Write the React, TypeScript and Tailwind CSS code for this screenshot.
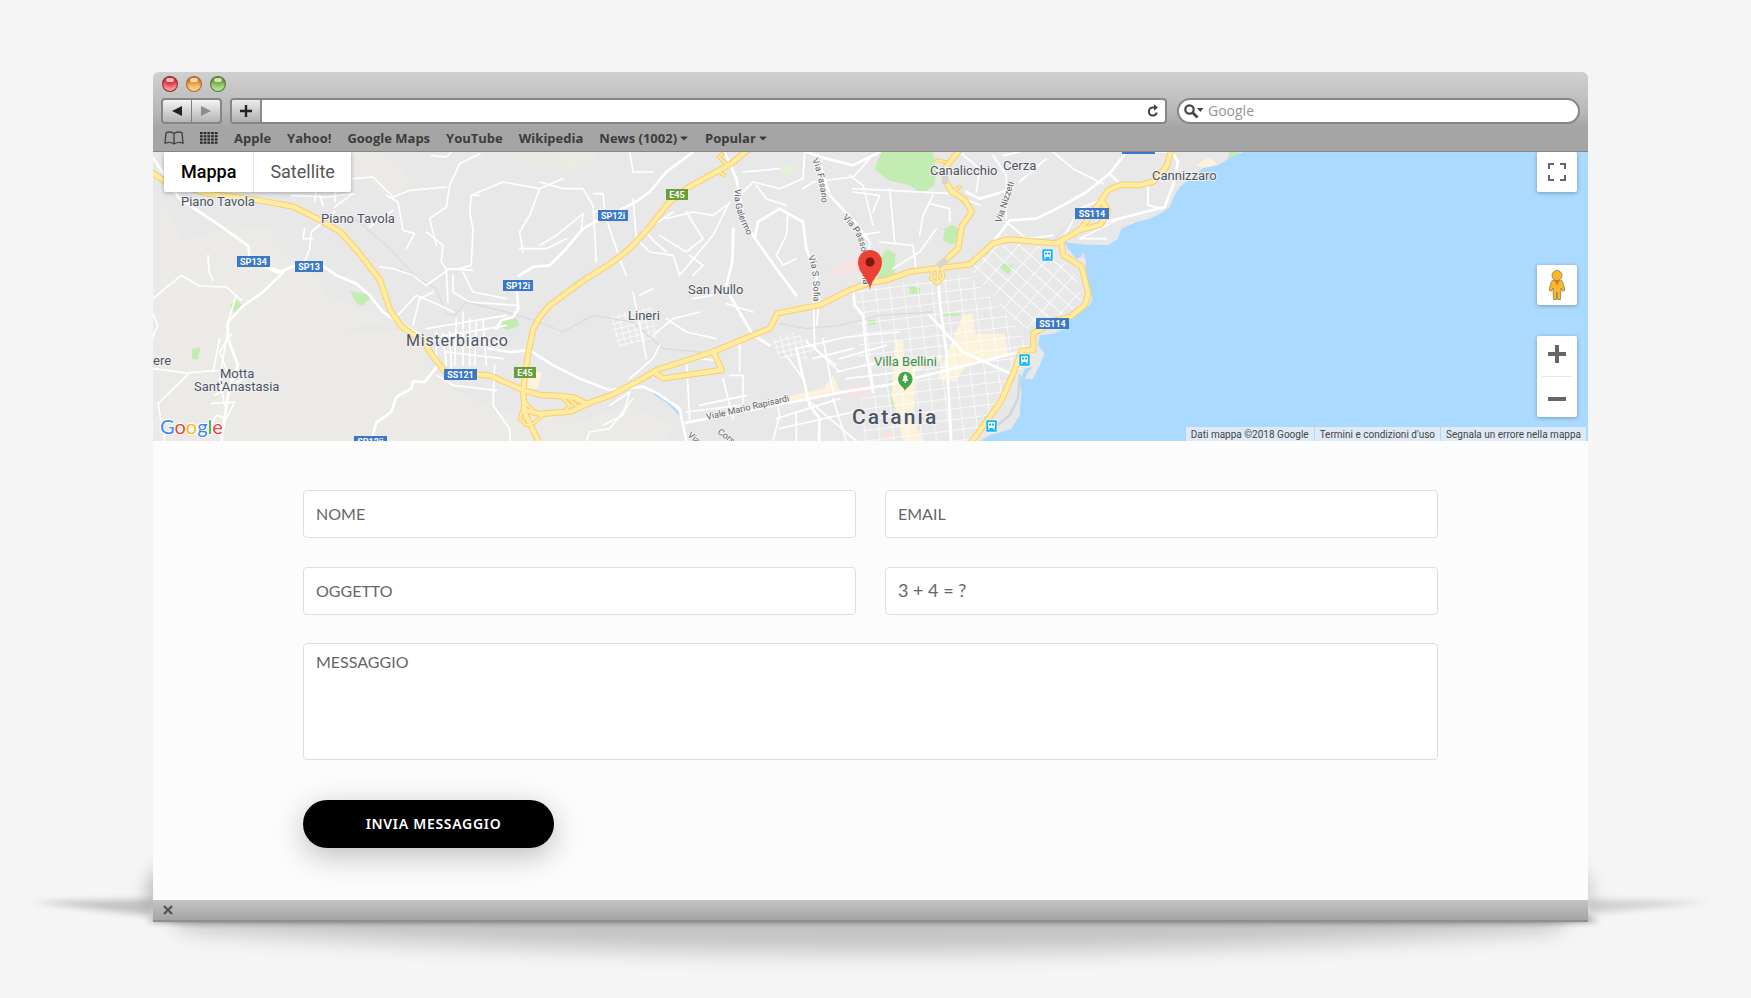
import { ReactNode } from "react";
import { FaCaretDown } from "react-icons/fa";

const bookmarks = [
  { label: "Apple" },
  { label: "Yahoo!" },
  { label: "Google Maps" },
  { label: "YouTube" },
  { label: "Wikipedia" },
  { label: "News (1002)", menu: true },
  { label: "Popular", menu: true },
];

const places = [
  { name: "Piano Tavola", x: 28, y: 54 },
  { name: "Piano Tavola", x: 168, y: 71 },
  { name: "Motta", x: 67, y: 226 },
  { name: "Sant'Anastasia", x: 41, y: 239 },
  { name: "ere", x: 0, y: 213 },
  { name: "San Nullo", x: 535, y: 142 },
  { name: "Lineri", x: 475, y: 168 },
  { name: "Canalicchio", x: 777, y: 23 },
  { name: "Cerza", x: 850, y: 18 },
  { name: "Cannizzaro", x: 999, y: 28 },
];

const shields = [
  { name: "SP134", x: 84, y: 104, w: 33, fill: "#3c78c8" },
  { name: "SP13", x: 142, y: 109, w: 28, fill: "#3c78c8" },
  { name: "SP12i", x: 350, y: 128, w: 30, fill: "#3c78c8" },
  { name: "SP12i", x: 445, y: 58, w: 30, fill: "#3c78c8" },
  { name: "SP12ii", x: 201, y: 284, w: 33, fill: "#3c78c8" },
  { name: "SS121", x: 291, y: 217, w: 33, fill: "#3c78c8" },
  { name: "SS114", x: 922, y: 56, w: 34, fill: "#3c78c8" },
  { name: "SS114", x: 883, y: 166, w: 33, fill: "#3c78c8" },
  { name: "", x: 969, y: -9, w: 33, fill: "#3c78c8" },
  { name: "E45", x: 361, y: 215, w: 22, fill: "#689f38" },
  { name: "E45", x: 513, y: 37, w: 22, fill: "#689f38" },
];

const stations = [
  { x: 889, y: 97 },
  { x: 866, y: 202 },
  { x: 833, y: 268 },
];

const highways = [
  "M-60 20 L0 64 L30 84 L160 124 L311 144 L421 164 L501 204 L561 239 L611 294 L681 384 L711 474 L746 524 L811 569 L841 614 L876 659 L971 667 L1011 671 L1111 714 L1161 729 L1221 732 L1262 736 L1300 755",
  "M1801 -20 L1736 34 L1601 109 L1546 154 L1491 224 L1431 289 L1381 329 L1300 380 L1191 459 L1161 494 L1141 529 L1126 604 L1116 664 L1111 724 L1116 784 L1156 867",
  "M1300 755 L1306 754 L1376 729 L1461 684 L1511 654 L1681 599 L1801 549 L1851 529 L1873 484 L2001 459 L2091 414 L2151 392 L2201 384 L2271 359 L2351 349 L2451 337 L2521 274 L2566 262 L2711 274 L2781 234 L2846 144 L2866 114 L2901 99 L2961 99 L3001 89 L3041 44 L3056 -10",
  "M2781 234 L2841 219 L2866 179 L2846 144",
  "M2726 274 L2731 309 L2786 344 L2806 424 L2796 459 L2751 494 L2711 504 L2641 544 L2641 594 L2606 596 L2581 664 L2546 744 L2511 794 L2451 876",
  "M2351 349 L2416 289 L2426 224 L2456 179 L2436 144 L2396 119 L2376 84 L2376 49 L2420 -6",
  "M1501 660 L1531 679 L1706 654 L1681 599",
  "M1116 774 L1161 786 L1231 780 L1256 778 L1306 754",
];

const ramps = [
  "M1115 750 L1100 800 L1120 820 L1145 812 L1170 788 M1115 750 L1150 785",
  "M1221 732 L1250 760 L1235 778 M1250 742 L1275 765 L1300 750",
  "M2340 355 L2334 380 L2354 395 L2372 375 L2366 350 M2354 350 V395",
  "M1725 40 L1698 15 L1708 5 M1690 56 L1715 70",
  "M2376 30 L2350 25 M2396 119 L2420 105",
];

const mainRoads = [
  "M2 20 L80 140 L200 220 L286 282 L290 320 L390 362 L330 420 L270 462 L225 510 L225 560 L255 640 L225 730 L205 867",
  "M325 340 L375 362 L430 340 L500 335 L550 370 L610 395 L650 430 L690 480 L725 504 L811 554",
  "M851 645 L815 690 L780 688 L775 710 L730 735 L715 780 L670 812 L655 867",
  "M1091 410 L1096 470 L1080 495 L1045 505 L1030 530 M1096 372 L1140 345 L1190 340 L1235 295 L1290 230 L1345 200 L1440 155 L1490 120 L1540 60 L1620 0",
  "M1010 590 L1070 600 L1130 595 L1201 640 L1280 680 L1370 714 L1470 704 L1510 722 L1580 770 L1600 867",
  "M1715 0 L1750 80 L1775 210 L1810 265 L1870 350 L1930 430",
  "M1741 230 L1738 330 L1720 400 L1730 430 L1800 549 L1850 580",
  "M1805 260 L1815 210 L1880 170 L1950 210 L1960 290 L1990 370 L1995 450",
  "M1960 0 L2020 20 L2100 40 L2180 0 M2000 30 L2030 130 L2110 215 L2150 270 L2145 370",
  "M1600 812 L1980 738 L2080 718 L2200 700 L2600 600",
  "M1930 590 L1970 760 L2000 800 L1998 867",
  "M2101 414 L2105 460 L2130 490 L2140 600 L2160 720",
  "M2356 390 L2362 460 L2380 600 L2395 867 M2330 490 L2430 600 L2570 664",
  "M2520 270 L2570 205 L2650 200 L2730 160 L2800 120 L2870 65 L2920 0 M2580 110 L2480 140 L2440 120",
  "M2870 65 L2900 95 M3040 -30 L3075 30 L3060 100 L3035 165 L2860 210",
];

const streets = [
  "M0 440 L85 370 L140 402 L220 405 L265 445 M165 310 L168 360 L180 385 M250 430 L220 525 M225 530 L200 680 L215 760 M200 560 L180 660 M235 545 L200 600 L235 690 M0 650 L100 663 L195 655 M15 755 L110 662 M15 755 L35 867 M185 730 L270 680",
  "M0 485 L14 520 L0 555 M175 755 L245 750 L220 800 L190 790 L160 850 L110 830",
  "M381 120 L430 20 M415 130 L520 135 L600 125 L545 165 M490 105 L485 150 M545 150 L550 110 M500 130 L510 160 M455 230 L450 260 L480 260 M545 180 L475 240 L470 290 L450 340",
  "M600 80 L660 75 L720 135 L770 115 L880 105 M700 130 L735 150 L750 235 L785 245 L760 290 M820 240 L870 280 L865 330 L880 350 L885 450 M720 175 L650 225",
  "M981 5 L920 35 L890 100 L880 165 L830 200 L850 280 M835 10 L880 15 L905 -10 M980 130 L955 130 L950 180 L960 230 L955 340 L920 350 M955 130 L1050 90 L1160 110 L1230 80 M1160 110 L1130 190 L1100 240 L1110 300 M1100 290 L1180 290 L1240 260 M680 345 L720 350 L780 370 L820 400 L890 350 L960 355",
  "M725 500 L790 430 L860 460 L900 480 M780 520 L800 440 L840 420 M900 370 L900 420 L950 450 L1090 460 M930 360 L960 420 L1060 440 M820 530 L1060 490 M830 560 L1060 520 M850 540 L850 620 M870 545 L880 640 M890 540 L895 650 M910 500 L905 640 M930 480 L930 640 M950 500 L950 640 M970 510 L965 640 M990 500 L1000 640 M880 600 L1050 620 M900 580 L1060 570 M1025 640 L1020 760 L1070 830 L1072 867 M851 670 L900 700 L1030 715",
  "M1161 90 L1230 110 L1290 110 L1320 160 L1330 330 M1321 125 L1350 125 L1355 170 L1325 180 M1161 280 L1210 250 L1290 185 L1285 230 M1360 200 L1400 320 L1420 370 M1440 140 L1450 260 L1490 300 L1560 310 L1580 370 L1680 250 L1730 150 M1430 0 L1440 60 L1500 60",
  "M1470 230 L1500 265 L1540 300 M1540 200 L1620 180 L1680 190 L1720 160 M1600 180 L1650 260 L1600 300 L1520 250 M1500 220 L1560 180 M1610 310 L1650 340 L1620 370 M1760 130 L1800 90 L1880 110 L1950 80 L1955 0 M1770 60 L1880 50 M1810 100 L1840 140 L1900 160 M1950 110 L1980 90 L2100 75 L2150 20",
  "M1905 185 L1900 250 L1870 310 L1890 340 L1930 320 M2100 110 L2400 125 L2480 160 M2090 70 L2130 100 L2160 220 M2210 110 L2225 270 M2180 270 L2280 280 L2290 360 M2340 130 L2310 190 L2300 250 M2100 120 L2180 130 L2160 180 M2120 250 L2180 240 M2220 350 L2300 300 L2350 230 M2330 155 L2390 170 L2390 210",
  "M1991 520 L2000 420 M1980 390 L1985 590 L2060 660 M1620 440 L1680 430 L1700 400 M1540 500 L1600 540 L1690 560 M1720 455 L1800 480 M1500 550 L1560 500 L1640 480 M1430 680 L1500 620 L1520 580 M1600 620 L1610 800 M1640 620 L1690 625 M1710 680 L1740 800 M1730 670 L1770 670 L1770 780 M1760 560 L1760 660",
  "M1640 760 L1780 730 M1600 780 L1760 760 M1370 760 L1430 720 L1410 790 L1350 820 M1300 867 L1310 840 L1370 830 L1440 740 M1440 420 L1480 620 M1460 430 L1500 410",
  "M1930 590 L2080 555 L2240 540 M1980 620 L2100 590 M2010 560 L2040 720 M1900 610 L1950 680 M1960 570 L2050 640 M1870 800 L2060 740 M1880 830 L2100 780 M1860 867 L1880 790 L1870 740 M1930 780 L1930 867 M1960 740 L2110 867 M2040 740 L2080 867 M2060 620 L2200 580 M2050 660 L2220 620 M2080 680 L2240 660",
  "M2420 0 L2480 50 L2470 120 M2520 10 L2560 70 L2560 200 M2550 10 L2600 0 M2700 0 L2760 50 L2850 95 M2600 90 L2680 20 M2560 210 L2620 260 L2700 250 M2730 260 L2780 170 L2850 140 M2985 100 L2985 160 L3030 170 M2970 0 L3060 0 M2900 200 L2780 260 L2860 260",
];

function TrafficLight({ className }: { className: string }) {
  return (
    <span
      className={`h-4 w-4 rounded-full border border-black/30 shadow-[inset_0_3px_3px_rgba(90,0,0,0.35),inset_0_-4px_4px_rgba(255,255,255,0.55)] ${className}`}
    >
      <span className="mx-auto mt-px block h-1 w-2 rounded-full bg-white/70" />
    </span>
  );
}

function BookIcon() {
  return (
    <svg viewBox="0 0 20 14" className="h-[14px] w-5" fill="none" stroke="#444" strokeWidth="1.4">
      <path d="M10 2.5C8 .6 4 .5 2 1.8L1 12c3-1 6-1 9 .8 3-1.8 6-1.8 9-.8L18 1.8C16 .5 12 .6 10 2.5v10" />
    </svg>
  );
}

function GridIcon() {
  return (
    <svg viewBox="0 0 18 12" className="h-3 w-[18px]" fill="#2b2b2b">
      {[0, 3.2, 6.4, 9.6].map((y) =>
        [0, 3.7, 7.4, 11.1, 14.8].map((x) => <rect key={`${x}-${y}`} x={x} y={y} width="2.7" height="2.2" />)
      )}
    </svg>
  );
}

function Toolbar() {
  return (
    <header className="rounded-t-md border-b border-[#858585] bg-linear-to-b from-[#d0d0d0] via-[#b8b8b8] via-50% to-[#a5a5a5] to-70% px-2 pt-1 font-['Open_Sans',sans-serif]">
      <div className="flex h-4 items-center gap-2 pl-px">
        <TrafficLight className="bg-[#e8323a]" />
        <TrafficLight className="bg-[#f59a2e]" />
        <TrafficLight className="bg-[#6fbb3c]" />
      </div>

      <div className="mt-[6px] flex h-[26px] items-stretch">
        <div className="flex w-[61px] overflow-hidden rounded border-2 border-[#858585] bg-linear-to-b from-[#f4f4f4] to-[#b5b5b5]">
          <button aria-label="Back" className="flex flex-1 items-center justify-center border-r border-[#7f7f7f]">
            <svg viewBox="0 0 10 10" className="h-[10px] w-[10px]" fill="#222">
              <path d="M10 0v10L0 5z" />
            </svg>
          </button>
          <button aria-label="Forward" className="flex flex-1 items-center justify-center">
            <svg viewBox="0 0 10 10" className="h-[10px] w-[10px]" fill="#8c8c8c">
              <path d="M0 0v10l10-5z" />
            </svg>
          </button>
        </div>

        <div className="ml-2 flex flex-1 overflow-hidden rounded border-2 border-[#858585] bg-white">
          <button
            aria-label="Add bookmark"
            className="flex w-[30px] items-center justify-center border-r-2 border-[#8a8a8a] bg-linear-to-b from-[#ececec] to-[#b0b0b0]"
          >
            <svg viewBox="0 0 12 12" className="h-3 w-3" stroke="#222" strokeWidth="2.4">
              <path d="M6 0v12M0 6h12" />
            </svg>
          </button>
          <input aria-label="Address" className="min-w-0 flex-1 bg-white outline-none" />
          <button aria-label="Reload" className="flex w-6 items-center justify-center">
            <svg viewBox="0 0 14 14" className="h-[14px] w-[14px]" fill="none" stroke="#444" strokeWidth="2">
              <path d="M8 3.5H6.5a4 4 0 1 0 4.3 5" />
              <path d="M8 .3l4 3.2-4 3.2z" fill="#444" stroke="none" />
            </svg>
          </button>
        </div>

        <div className="ml-[10px] flex w-[403px] items-center rounded-full border-2 border-[#858585] bg-white pl-[5px]">
          <svg viewBox="0 0 20 14" className="h-[14px] w-5" fill="none" stroke="#444" strokeWidth="2.2">
            <circle cx="5.5" cy="5.5" r="4.2" />
            <path d="M8.5 8.5l5 5" strokeWidth="2.8" />
            <path d="M13 4h6.5l-3.2 4z" fill="#444" stroke="none" />
          </svg>
          <input
            aria-label="Search"
            placeholder="Google"
            className="ml-1 min-w-0 flex-1 bg-transparent text-sm leading-5 outline-none placeholder:text-[#959595]"
          />
        </div>
      </div>

      <nav className="flex h-[27px] items-center gap-4 pl-[3px] text-[13px] leading-5 font-bold text-[#3c3c3c]">
        <BookIcon />
        <GridIcon />
        {bookmarks.map((b) => (
          <a key={b.label} href="#" className="flex items-center gap-[2px]">
            {b.label}
            {b.menu && <FaCaretDown className="h-3 w-[10px]" />}
          </a>
        ))}
      </nav>
    </header>
  );
}

function MapCanvas() {
  return (
    <svg
      viewBox="0 0 1435 289"
      preserveAspectRatio="xMidYMid slice"
      className="h-full w-full font-['Roboto',sans-serif]"
      role="img"
      aria-label="Catania"
    >
      <defs>
        <pattern id="diagonal" width="34" height="46" patternUnits="userSpaceOnUse" patternTransform="rotate(-48)">
          <path d="M0 0H34M0 0V46" stroke="#fff" strokeWidth="5" fill="none" />
        </pattern>
        <pattern id="centre" width="42" height="32" patternUnits="userSpaceOnUse" patternTransform="rotate(-7)">
          <path d="M0 0H42M0 0V32" stroke="#fff" strokeWidth="4" fill="none" />
        </pattern>
        <pattern id="block" width="19" height="17" patternUnits="userSpaceOnUse" patternTransform="rotate(-14)">
          <path d="M0 0H19M0 0V17" stroke="#fff" strokeWidth="4" fill="none" />
        </pattern>
        <path id="via-passo" d="M689 66 Q707 82 708 100 Q709 125 712 150" />
        <path id="via-galermo" d="M582 37 Q579 58 598 90" />
        <path id="via-fasano" d="M659 8 Q668 26 669 60" />
        <path id="via-sofia" d="M655 105 Q662 118 660 160" />
      </defs>

      <rect width="1435" height="289" fill="#e8e8e8" />

      {/* Drawn on a grid three times finer than the labels */}
      <g transform="scale(0.33333)" strokeLinejoin="round" strokeLinecap="round">
        <path
          d="M0 120 L60 200 L85 265 L180 240 L230 220 L345 225 L390 300 L440 330 L500 380 L520 430 L680 490 L700 510 L580 530 L570 530 L640 545 L740 530 L815 580 L810 640 L900 710 L960 745 L1040 780 L1150 790 L1300 800 L1420 760 L1560 820 L1540 867 H0Z M560 0 H700 L760 60 L770 110 L700 130 L640 75 L560 60Z M900 0 H1340 L1240 60 L1215 0Z"
          fill="#ebeae6"
        />
        <path d="M1040 0h290v60l-110 5z" fill="#ebe9e1" opacity=".7" />

        <g fill="#c3ecb2">
          <path d="M2185 0H2340L2350 60L2345 100L2305 125L2270 100L2205 85L2165 50Z" />
          <path d="M2200 290l28 15-4 60-40 20-28-25z" />
          <path d="M2375 230l25-12 22 18-6 30-22 14-24-16z" />
          <path d="M590 418l50 8 15 12-30 24-16-10z" />
          <path d="M250 443l18 17-22 20-16-20z" />
          <path d="M118 590l24-3-8 36-18-3z" />
          <path d="M1045 505l45-8 10 25-40 12-18-12z" />
          <path d="M2210 685h35l15 55-42 30z" />
          <path d="M2267 402l34 6v18h-28z" />
          <path d="M2550 330l30 12-12 26-26-20z" />
          <path d="M2146 504h22v14h-22zM2370 484h50v8h-50z" />
          <path d="M3232 -10h30l-8 30-30 4z" />
        </g>
        <path d="M1885 45l38-8 2 16-25 18-12 4z" fill="#e3f3da" />
        <path d="M2050 345l60-30 25 30-40 20-80 5z M2085 710l50-15 15 28-55 18z M2190 845l35-10v25h-35z" fill="#f8e1e1" />
        <path
          d="M2225 570l25-5 5 70 110-30 0 20-80 35 0 150 40 90h-70l-20-110-20-60z M2430 490l30-5 5 60 90 0 10 60-120 30-40 55-50-10 20-60z M1870 740l140-30 30-40 20 50-190 34z M1126 660l40 0-10 50-40 0z M3130 40l40-25 20 20-20 20z"
          fill="#fdf3dc"
        />
        <path d="M1500 722l45 30 40 40 14 75" stroke="#aadaff" strokeWidth="6" fill="none" />

        <path d="M2440 340L2540 270L2700 290L2760 350L2790 440L2740 490L2640 540L2580 500Z" fill="url(#diagonal)" />
        <path d="M2110 415L2440 360L2580 510L2640 600L2580 680L2470 840L2440 867H2130Z" fill="url(#centre)" />
        <path d="M1365 490L1500 460L1510 560L1400 590Z" fill="url(#block)" />
        <path d="M1850 560L1920 540L2000 580L1960 620L1880 620Z" fill="url(#block)" />

        <g fill="none" stroke="#d9dbde" strokeWidth="4">
          <path d="M741 350 L850 410 L880 485 L905 490 L940 450 L1060 480 L1160 510 L1230 540 L1320 490 L1440 510 L1530 590 L1640 600" />
          <path d="M1880 515 L1960 530 L2060 520 L2180 490 L2340 480" />
          <path d="M2700 270 L2730 230 M600 195 L700 280 L790 375" />
        </g>

        <g fill="none" stroke="#fff" strokeWidth="5">
          {streets.map((d) => (
            <path key={d} d={d} />
          ))}
        </g>
        <g fill="none" stroke="#fff" strokeWidth="8">
          {mainRoads.map((d) => (
            <path key={d} d={d} />
          ))}
        </g>

        {/* Sea */}
        <path
          d="M3270 0 L3235 15 L3195 40 L3150 48 L3120 75 L3080 105 L3065 130 L3050 165 L3030 180 L2990 200 L2950 210 L2905 230 L2895 260 L2865 280 L2800 278 L2735 270 L2745 290 L2770 320 L2785 315 L2790 300 L2800 330 L2795 370 L2805 400 L2818 440 L2810 460 L2780 480 L2750 500 L2740 530 L2700 545 L2660 550 L2655 580 L2675 605 L2660 640 L2640 680 L2615 680 L2625 660 L2640 645 L2615 650 L2600 690 L2605 720 L2600 790 L2575 830 L2510 850 L2480 867 H4305 V0 Z"
          fill="#aadaff"
        />
        <path d="M2600 670 L2595 740 L2570 790 L2520 830" stroke="#d3d6d9" strokeWidth="8" fill="none" />

        <g fill="none" stroke="#f8cf6b">
          {highways.map((d) => (
            <path key={d} d={d} strokeWidth="19" />
          ))}
          {ramps.map((d) => (
            <path key={d} d={d} strokeWidth="12" />
          ))}
        </g>
        <g fill="none" stroke="#ffeba1">
          {highways.map((d) => (
            <path key={d} d={d} strokeWidth="13" />
          ))}
          {ramps.map((d) => (
            <path key={d} d={d} strokeWidth="6" />
          ))}
        </g>
        <path d="M2355 345l26-22M2376 60v36" stroke="#d5d5d5" strokeWidth="16" strokeLinecap="butt" />
      </g>

      {/* Street names */}
      <g fontSize="9" fill="#5f6368" stroke="#f4f4f4" strokeWidth="2" paintOrder="stroke">
        <text>
          <textPath href="#via-galermo">Via Galermo</textPath>
        </text>
        <text>
          <textPath href="#via-fasano">Via Fasano</textPath>
        </text>
        <text>
          <textPath href="#via-passo">Via Passo Gravina</textPath>
        </text>
        <text>
          <textPath href="#via-sofia">Via S. Sofia</textPath>
        </text>
        <text transform="translate(848 71) rotate(-72)">Via Nizzeti</text>
        <text transform="translate(554 268) rotate(-13)">Viale Mario Rapisardi</text>
        <text transform="translate(564 281) rotate(36)">Corso</text>
        <text transform="translate(534 284) rotate(40)">Via</text>
      </g>

      {/* Places */}
      <g fontSize="13" fill="#4d5564" stroke="#f1f1f1" strokeWidth="2" paintOrder="stroke">
        {places.map((p) => (
          <text key={`${p.name}-${p.x}`} x={p.x} y={p.y}>
            {p.name}
          </text>
        ))}
        <text x="721" y="214" fill="#388e3c">
          Villa Bellini
        </text>
        <text x="253" y="194" fontSize="16" className="tracking-wider">
          Misterbianco
        </text>
        <text x="699" y="272" fontSize="21" fontWeight="500" className="tracking-widest">
          Catania
        </text>
      </g>

      {shields.map((s) => (
        <g key={`${s.name}-${s.x}`}>
          <rect x={s.x} y={s.y} width={s.w} height="11" fill={s.fill} />
          {s.name && (
            <text x={s.x + s.w / 2} y={s.y + 9} fontSize="9" fontWeight="700" fill="#fff" textAnchor="middle">
              {s.name}
            </text>
          )}
        </g>
      ))}

      {stations.map((s) => (
        <g key={s.x} transform={`translate(${s.x} ${s.y})`}>
          <rect width="11" height="12" rx="1" fill="#12b5f5" stroke="#fff" strokeWidth=".5" />
          <path d="M3 2h5q1 0 1 1v4q0 1-1 1H3q-1 0-1-1V3q0-1 1-1z" fill="#fff" />
          <path d="M3 3.5h2v2H3zM6 3.5h2v2H6z" fill="#12b5f5" />
          <path d="M3.5 8l-1 2M7.5 8l1 2" stroke="#fff" />
        </g>
      ))}

      {/* Villa Bellini */}
      <path d="M752 239c-1-4-7-6-7-12a7.3 7.3 0 0 1 14.6 0c0 6-6 8-7.6 12z" fill="#43a843" />
      <path d="M752.3 221.5l-2.5 4h1l-1.5 3.5h2.3v2h1.4v-2h2.3l-1.5-3.5h1z" fill="#fff" />

      {/* Marker */}
      <path d="M717 138c-1-12-12-16-12-28a12 12 0 0 1 24 0c0 12-11 16-12 28z" fill="#ea4335" />
      <circle cx="717" cy="110" r="4.5" fill="#811411" />

      <text x="7" y="282" fontSize="20" stroke="#fff" strokeWidth="2" paintOrder="stroke" className="font-['Lato',sans-serif]">
        <tspan fill="#4285f4">G</tspan>
        <tspan fill="#ea4335">o</tspan>
        <tspan fill="#fbbc05">o</tspan>
        <tspan fill="#4285f4">g</tspan>
        <tspan fill="#34a853">l</tspan>
        <tspan fill="#ea4335">e</tspan>
      </text>
    </svg>
  );
}

function ControlButton({ label, className = "", children }: { label: string; className?: string; children: ReactNode }) {
  return (
    <button
      aria-label={label}
      className={`flex h-10 w-10 items-center justify-center rounded-xs bg-white shadow-[0_1px_4px_rgba(0,0,0,0.3)] ${className}`}
    >
      {children}
    </button>
  );
}

function MapPanel() {
  return (
    <section className="relative h-[289px] overflow-hidden font-['Roboto',sans-serif]">
      <MapCanvas />

      <div className="absolute top-0 left-[11px] flex h-10 divide-x divide-gray-200 rounded-b-xs bg-white text-lg leading-10 shadow-[0_1px_4px_rgba(0,0,0,0.3)]">
        <button className="px-[17px] font-medium text-black">Mappa</button>
        <button className="px-4 text-[#565656]">Satellite</button>
      </div>

      <div className="absolute top-0 right-[11px] flex flex-col">
        <ControlButton label="Schermo intero">
          <svg viewBox="0 0 18 18" className="h-[18px] w-[18px]" fill="none" stroke="#666" strokeWidth="2">
            <path d="M1 6V1h5M12 1h5v5M17 12v5h-5M6 17H1v-5" />
          </svg>
        </ControlButton>
        <ControlButton label="Street View" className="mt-[73px]">
          <svg viewBox="0 0 18 30" className="h-[30px] w-[18px]" fill="#fbb829" stroke="#8a7a55" strokeWidth=".8">
            <path d="M6 10h6q2 0 2.6 2L17 20l-2.3 1.200L13 18l-.5 11.500h-2.800L9 22l-.7 7.500H5.500L5 18l-1.700 3.200L1 20l2.400-8q.6-2 2.600-2z" />
            <circle cx="9" cy="5.5" r="5" />
            <path d="M6 10.5h6l-3 5z" fill="#e07a2f" stroke="none" />
          </svg>
        </ControlButton>
        <div className="mt-[31px] rounded-xs bg-white shadow-[0_1px_4px_rgba(0,0,0,0.3)]">
          <button aria-label="Zoom avanti" className="flex h-10 w-10 items-center justify-center pb-1">
            <svg viewBox="0 0 18 18" className="h-[18px] w-[18px]" stroke="#666" strokeWidth="4">
              <path d="M9 0v18M0 9h18" />
            </svg>
          </button>
          <div className="mx-[5px] h-px bg-gray-200" />
          <button aria-label="Zoom indietro" className="flex h-10 w-10 items-center justify-center">
            <svg viewBox="0 0 18 18" className="h-[18px] w-[18px]" stroke="#666" strokeWidth="4">
              <path d="M0 11h18" />
            </svg>
          </button>
        </div>
      </div>

      <div className="absolute right-[2px] bottom-0 flex gap-px text-[10px] leading-3 text-[#444]">
        <span className="bg-[#deebf6] px-[5px] pt-[2px]">Dati mappa ©2018 Google</span>
        <a href="#" className="bg-[#deebf6] px-[5px] pt-[2px]">
          Termini e condizioni d'uso
        </a>
        <a href="#" className="bg-[#deebf6] px-[5px] pt-[2px]">
          Segnala un errore nella mappa
        </a>
      </div>
    </section>
  );
}

const field =
  "w-full rounded border border-[#dedede] bg-white px-3 text-[#666] outline-none placeholder:text-[#666] placeholder:opacity-100";

function ContactForm() {
  return (
    <form className="bg-[#fcfcfc] px-[150px] pt-[49px] pb-[52px] font-['Lato',sans-serif]">
      <div className="grid grid-cols-2 gap-[29px]">
        <input aria-label="Nome" placeholder="NOME" className={`${field} h-12 pb-[2px] text-base`} />
        <input aria-label="Email" placeholder="EMAIL" className={`${field} h-12 pb-[2px] text-base`} />
        <input aria-label="Oggetto" placeholder="OGGETTO" className={`${field} h-12 pb-[2px] text-base`} />
        <input aria-label="Verifica" placeholder="3 + 4 = ?" className={`${field} h-12 pb-[2px] text-lg`} />
      </div>
      <textarea
        aria-label="Messaggio"
        placeholder="MESSAGGIO"
        className={`${field} mt-7 block h-[117px] resize-none py-[6px] text-base`}
      />
      <button
        type="button"
        className="mt-10 block h-12 w-[251px] rounded-full bg-black pl-[10px] font-['Noto_Sans',sans-serif] text-sm font-semibold tracking-wider text-white shadow-[0_8px_30px_rgba(0,0,0,0.25)]"
      >
        INVIA MESSAGGIO
      </button>
    </form>
  );
}

function GroundShadow() {
  return (
    <svg
      viewBox="0 0 1751 998"
      preserveAspectRatio="none"
      className="absolute inset-0 h-full w-full"
      aria-hidden="true"
    >
      <defs>
        <filter id="soft" filterUnits="userSpaceOnUse" x="0" y="700" width="1751" height="298">
          <feGaussianBlur stdDeviation="11" />
        </filter>
        <filter id="tight" filterUnits="userSpaceOnUse" x="0" y="700" width="1751" height="298">
          <feGaussianBlur stdDeviation="3" />
        </filter>
      </defs>
      <path d="M165 905H1575L1555 930Q875 975 185 930Z" fill="#000" opacity=".2" filter="url(#soft)" />
      <path d="M146 921L165 915H1580L1600 921L1560 922H180Z" fill="#000" opacity=".5" filter="url(#tight)" />
      <path d="M30 902L155 899V916Z" fill="#000" opacity=".2" filter="url(#tight)" />
      <path d="M1712 902L1586 899V914Z" fill="#000" opacity=".14" filter="url(#tight)" />
      <path d="M170 862V900H148Z" fill="#000" opacity=".6" filter="url(#soft)" />
      <path d="M1571 862V900H1592Z" fill="#000" opacity=".35" filter="url(#soft)" />
    </svg>
  );
}

export default function App() {
  return (
    <main className="relative min-h-screen bg-[#f5f5f5] pt-[72px] pr-[163px] pl-[153px]">
      <GroundShadow />
      <div className="relative">
        <Toolbar />
        <MapPanel />
        <ContactForm />
        <footer className="flex h-[22px] items-center border-b-2 border-[#8f8f8f] bg-linear-to-b from-[#c4c4c4] to-[#a4a4a4] pb-px pl-[10px]">
          <button aria-label="Close">
            <svg viewBox="0 0 10 10" className="block h-[10px] w-[10px]" stroke="#555" strokeWidth="2.4">
              <path d="M1 1l8 8M9 1L1 9" />
            </svg>
          </button>
        </footer>
      </div>
    </main>
  );
}
